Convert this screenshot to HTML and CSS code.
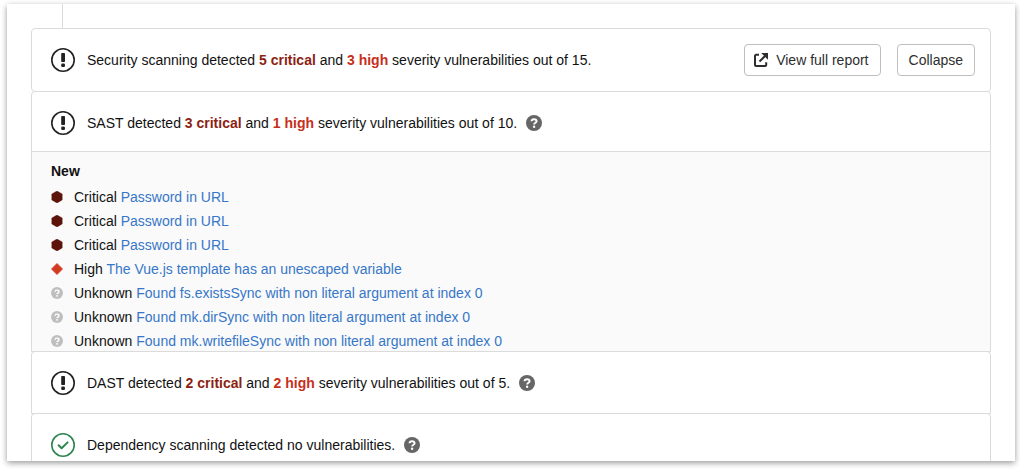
FILE: index.html
```html
<!DOCTYPE html>
<html lang="en">
<head>
<meta charset="utf-8">
<title>Security scanning</title>
<link rel="stylesheet" href="styles.css">
</head>
<body>
<svg class="symbols" aria-hidden="true">
  <symbol id="alert" viewBox="0 0 24 24"><circle cx="12" cy="12" r="11.200" fill="none" stroke="currentColor" stroke-width="1.600"/><rect x="10.200" y="5" width="3.800" height="9" rx=".8" fill="currentColor"/><rect x="10.200" y="15.500" width="3.800" height="3.500" rx="1.200" fill="currentColor"/></symbol>
  <symbol id="success" viewBox="0 0 24 24"><circle cx="12" cy="12" r="11.200" fill="none" stroke="currentColor" stroke-width="1.600"/><path d="M7.600 12.200l3 3 6-5.800" fill="none" stroke="currentColor" stroke-width="2" stroke-linecap="round" stroke-linejoin="round"/></symbol>
  <symbol id="question" viewBox="0 0 16 16"><circle cx="8" cy="8" r="8" fill="currentColor"/><path d="M5.500 6.300C5.600 4.800 6.700 4.200 8 4.200s2.600.7 2.600 2C10.600 7.800 8.100 7.700 8.100 9.500" fill="none" stroke="#fff" stroke-width="1.900"/><circle cx="8.100" cy="11.800" r="1.200" fill="#fff"/></symbol>
  <symbol id="critical" viewBox="0 0 12 12"><path d="M6 0l5.200 3v6L6 12 .8 9V3z" fill="currentColor" stroke="currentColor" stroke-width=".4" stroke-linejoin="round"/></symbol>
  <symbol id="high" viewBox="0 0 12 12"><path d="M6 .5L11.500 6 6 11.500.5 6z" fill="currentColor" stroke="currentColor" stroke-width=".8" stroke-linejoin="round"/></symbol>
  <symbol id="external" viewBox="0 0 14 14"><path d="M5 1.800H2a1 1 0 0 0-1 1V12a1 1 0 0 0 1 1h9.200a1 1 0 0 0 1-1V9.300M5.500 8.500L12 2" fill="none" stroke="currentColor" stroke-width="2"/><path d="M7.200 0H14v6.800z" fill="currentColor"/></symbol>
</svg>
<main class="frame">
  <div class="connector"></div>
  <section class="card">
    <header class="summary summary-main">
      <svg class="status"><use href="#alert"/></svg>
      <p class="text">Security scanning detected <strong class="critical">5 critical</strong> and <strong class="high">3 high</strong> severity vulnerabilities out of 15.</p>
      <div class="actions">
        <button class="button" type="button"><svg class="external"><use href="#external"/></svg>View full report</button>
        <button class="button" type="button">Collapse</button>
      </div>
    </header>
  </section>
  <section class="card card-joined">
    <header class="summary summary-open">
      <svg class="status"><use href="#alert"/></svg>
      <p class="text">SAST detected <strong class="critical">3 critical</strong> and <strong class="high">1 high</strong> severity vulnerabilities out of 10.</p>
      <button class="help" type="button" aria-label="Help"><svg class="help-icon"><use href="#question"/></svg></button>
    </header>
    <div class="report">
      <h2 class="report-title">New</h2>
      <ul class="issues">
        <li class="issue"><svg class="severity is-critical"><use href="#critical"/></svg><span>Critical <a class="link" href="#">Password in URL</a></span></li>
        <li class="issue"><svg class="severity is-critical"><use href="#critical"/></svg><span>Critical <a class="link" href="#">Password in URL</a></span></li>
        <li class="issue"><svg class="severity is-critical"><use href="#critical"/></svg><span>Critical <a class="link" href="#">Password in URL</a></span></li>
        <li class="issue"><svg class="severity is-high"><use href="#high"/></svg><span>High <a class="link" href="#">The Vue.js template has an unescaped variable</a></span></li>
        <li class="issue"><svg class="severity is-unknown"><use href="#question"/></svg><span>Unknown <a class="link" href="#">Found fs.existsSync with non literal argument at index 0</a></span></li>
        <li class="issue"><svg class="severity is-unknown"><use href="#question"/></svg><span>Unknown <a class="link" href="#">Found mk.dirSync with non literal argument at index 0</a></span></li>
        <li class="issue"><svg class="severity is-unknown"><use href="#question"/></svg><span>Unknown <a class="link" href="#">Found mk.writefileSync with non literal argument at index 0</a></span></li>
      </ul>
    </div>
  </section>
  <section class="card card-joined">
    <header class="summary">
      <svg class="status"><use href="#alert"/></svg>
      <p class="text">DAST detected <strong class="critical">2 critical</strong> and <strong class="high">2 high</strong> severity vulnerabilities out of 5.</p>
      <button class="help" type="button" aria-label="Help"><svg class="help-icon"><use href="#question"/></svg></button>
    </header>
  </section>
  <section class="card card-joined">
    <header class="summary">
      <svg class="status is-success"><use href="#success"/></svg>
      <p class="text">Dependency scanning detected no vulnerabilities.</p>
      <button class="help" type="button" aria-label="Help"><svg class="help-icon"><use href="#question"/></svg></button>
    </header>
  </section>
</main>
</body>
</html>
```
FILE: styles.css
```css
* { box-sizing: border-box; }
body {
  margin: 0;
  height: 100vh;
  padding: 4px 5px 8px 7px;
  display: flex;
  background: #fff;
  color: #111;
  font: 14px/20px "Helvetica Neue", "Liberation Sans", Arial, sans-serif;
}
.symbols { position: absolute; width: 0; height: 0; }
.frame {
  flex: 1;
  overflow: hidden;
  padding: 0 24px;
  background: #fff;
  box-shadow: 0 2px 6px rgba(0, 0, 0, .4);
}
.connector { height: 24px; margin-left: 31px; border-left: 1px solid #dbdbdb; }
.card { border: 1px solid #dbdbdb; border-radius: 4px; background: #fff; }
.card + .card { margin-top: -1px; }
.card-joined { border-radius: 4px 4px 0 0; }
.summary { display: flex; align-items: center; padding: 19px 15px 18px 19px; }
.summary-main { padding-top: 15px; padding-bottom: 15px; }
.summary-open { padding-bottom: 16px; }
.status { flex: none; width: 24px; height: 24px; margin-right: 12px; color: #222; }
.is-success { color: #2f8550; }
.text { margin: 0; }
.critical { color: #8d1f12; }
.high { color: #c62f1b; }
.actions { display: flex; gap: 16px; margin-left: auto; }
.button {
  display: flex;
  align-items: center;
  height: 32px;
  padding: 0 11px;
  border: 1px solid #bfbfbf;
  border-radius: 4px;
  background: #fff;
  color: #2e2e2e;
  font: inherit;
  white-space: nowrap;
}
.external { width: 14px; height: 14px; margin: 0 8px 0 -2px; }
.help { display: flex; margin: 0 0 0 9px; padding: 0; border: 0; background: none; color: #666; }
.help-icon { width: 16px; height: 16px; }
.report {
  max-height: 200px;
  overflow: hidden;
  padding: 9px 19px 0;
  border-top: 1px solid #dbdbdb;
  background: #fafafa;
}
.report-title { margin: 0 0 4px; font-size: 14px; line-height: 20px; }
.issues { margin: 0; padding: 0; list-style: none; }
.issue { display: flex; align-items: center; height: 24px; }
.severity { flex: none; width: 12px; height: 12px; margin-right: 11px; }
.is-critical { color: #5c1309; }
.is-high { color: #d13b20; }
.is-unknown { color: #bfbfbf; }
.link { color: #3777c8; text-decoration: none; }
```
